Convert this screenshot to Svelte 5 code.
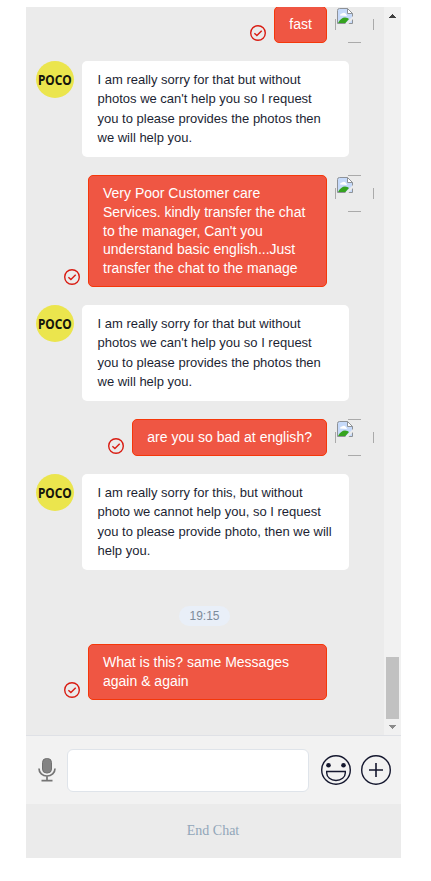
<script>
  const excuse = [
    'I am really sorry for that but without',
    "photos we can't help you so I request",
    'you to please provides the photos then',
    'we will help you.'
  ];

  const messages = [
    { from: 'user', lines: ['fast'], avatar: true },
    { from: 'agent', lines: excuse },
    {
      from: 'user',
      lines: [
        'Very Poor Customer care',
        'Services. kindly transfer the chat',
        "to the manager, Can't you",
        'understand basic english...Just',
        'transfer the chat to the manage'
      ],
      avatar: true,
      wide: true
    },
    { from: 'agent', lines: excuse },
    { from: 'user', lines: ['are you so bad at english?'], avatar: true },
    {
      from: 'agent',
      lines: [
        'I am really sorry for this, but without',
        'photo we cannot help you, so I request',
        'you to please provide photo, then we will',
        'help you.'
      ]
    },
    { from: 'time', text: '19:15' },
    { from: 'user', lines: ['What is this? same Messages', 'again & again'], avatar: false, wide: true }
  ];

  let draft = '';
</script>

<div class="chat">
  <div class="history">
    <div class="messages">
      {#each messages as message}
        {#if message.from === 'time'}
          <div class="time"><span>{message.text}</span></div>
        {:else if message.from === 'agent'}
          <div class="row agent">
            <div class="logo"><span>POCO</span></div>
            <div class="bubble">
              {#each message.lines as line}
                <div class="line">{line}</div>
              {/each}
            </div>
          </div>
        {:else}
          <div class="row user">
            <svg class="sent" viewBox="0 0 16 16">
              <circle cx="8" cy="8" r="7.3" />
              <path d="M4.4 8.2l2.5 2.4 4.8-4.9" />
            </svg>
            <div class="bubble" class:wide={message.wide}>
              {#each message.lines as line}
                <div class="line">{line}</div>
              {/each}
            </div>
            <div class="avatar" class:empty={!message.avatar}>
              {#if message.avatar}
                <svg class="broken" viewBox="0 0 16 16">
                  <path d="M.5 2.5Q.5 .5 2.5 .5H10.5L15.5 5.5V15.5H.5Z" fill="#c6dafa" />
                  <path d="M3 7.5a2 2 0 0 1 2-2 2.5 2.5 0 0 1 4 .5l1 2z" fill="#fff" />
                  <path d="M.5 2.5V15.5H15.5V5.5L10.5 .5H2.5Q.5 .5 .5 2.5z" fill="none" stroke="#8e9297" />
                  <path d="M10.5 .5V5.5H15.5z" fill="#fff" stroke="#8e9297" />
                  <path d="M1 15Q4 9.5 8 9.5q3 0 4 1.5L8.5 15z" fill="#35a31f" />
                  <path d="M16 8V11L11.5 16H8z" fill="#ebebeb" />
                </svg>
              {/if}
            </div>
          </div>
        {/if}
      {/each}
    </div>
    <div class="scrollbar">
      <svg class="arrow" viewBox="0 0 17 17"><path d="M5 11h7v-1h-1v-1h-1V8H9V7H8v1H7v1H6v1H5z" fill="#404040" /></svg>
      <div class="thumb"></div>
      <svg class="arrow down" viewBox="0 0 17 16"><path d="M5 6h7v1h-1v1h-1v1H9v1H8V9H7V8H6V7H5z" fill="#8b8b8b" /></svg>
    </div>
  </div>

  <div class="composer">
    <svg class="mic" viewBox="0 0 18 24">
      <rect x="4.5" y=".5" width="9" height="14.5" rx="4" fill="#848484" stroke="#707070" />
      <path d="M1 10.5C1 15 4.5 18 9 18s8-3 8-7.5M9 18v4.5M3.5 22.7h11" fill="none" stroke="#757575" stroke-width="1.7" />
    </svg>
    <input type="text" bind:value={draft} aria-label="Message" />
    <svg class="icon" viewBox="0 0 30 30">
      <circle cx="15" cy="15" r="14.3" />
      <circle class="eye" cx="7.5" cy="10.3" r="2.3" />
      <circle class="eye" cx="22.5" cy="10.3" r="2.3" />
      <path d="M5.7 16.5h18.6v1.5c0 4-4 7.5-9.3 7.5s-9.3-3.5-9.3-7.5z" />
    </svg>
    <svg class="icon" viewBox="0 0 30 30">
      <circle cx="15" cy="15" r="14.3" />
      <path class="plus" d="M8 15h14M15 8v14" />
    </svg>
  </div>

  <div class="end">End Chat</div>
</div>

<style>
  :global(body) {
    margin: 0;
    background: #fff;
  }

  .chat {
    width: 375px;
    height: 851px;
    margin: 7px 0 0 26px;
    display: flex;
    flex-direction: column;
    background: #ebebeb;
    font-family: 'Liberation Sans', Arial, sans-serif;
  }

  .history {
    height: 728px;
    display: flex;
    overflow: hidden;
  }

  .messages {
    flex: 1;
    display: flex;
    flex-direction: column;
    justify-content: flex-end;
    gap: 18px;
    padding: 0 10px 35.25px;
  }

  .row {
    display: flex;
    flex-shrink: 0;
    gap: 8px;
  }

  .bubble {
    box-sizing: border-box;
    border-radius: 5px;
  }

  .line {
    white-space: nowrap;
  }

  .agent .bubble {
    width: 267px;
    height: 96px;
    padding: 9px 15.5px;
    background: #fff;
    color: #1c1f33;
    font-size: 13px;
    line-height: 19.4px;
  }

  .logo {
    width: 38px;
    height: 37px;
    border-radius: 50%;
    background: #ebe54d;
    display: flex;
    align-items: center;
    justify-content: center;
  }

  .logo span {
    font: bold 14px/36px 'Noto Sans', sans-serif;
    color: #15150c;
    transform: scaleX(0.85);
  }

  .user {
    justify-content: flex-end;
  }

  .user .bubble {
    padding: 8px 14px 8.25px;
    border: 1px solid #f5370a;
    background: #ef5643;
    color: #fff;
    font-size: 14px;
    line-height: 18.75px;
    letter-spacing: 0.02px;
  }

  .user .bubble.wide {
    width: 239px;
    letter-spacing: 0;
  }

  .sent {
    width: 16px;
    height: 16px;
    align-self: flex-end;
    margin-bottom: 2px;
    fill: none;
    stroke: #d91c12;
    stroke-width: 1.4;
  }

  .avatar {
    box-sizing: border-box;
    width: 39px;
    height: 37px;
    padding: 2px;
    /* only the middle of each side of the image frame stays visible */
    background:
      linear-gradient(#aaa, #aaa) 13px 0 / 13px 1px no-repeat,
      linear-gradient(#aaa, #aaa) 13px 100% / 13px 1px no-repeat,
      linear-gradient(#aaa, #aaa) 0 13px / 1px 11px no-repeat,
      linear-gradient(#aaa, #aaa) 100% 13px / 1px 11px no-repeat;
  }

  .avatar.empty {
    background: none;
  }

  .broken {
    display: block;
    width: 16px;
    height: 16px;
  }

  .time {
    display: flex;
    flex-shrink: 0;
    justify-content: center;
    margin-top: 18px;
    padding-right: 1px;
  }

  .time span {
    width: 51px;
    height: 20px;
    border-radius: 10px;
    background: #e9eff8;
    color: #7d8b9b;
    font-size: 12px;
    line-height: 20px;
    text-align: center;
  }

  .scrollbar {
    width: 17px;
    display: flex;
    flex-direction: column;
    align-items: center;
    background: #f1f1f1;
  }

  .arrow {
    width: 17px;
    height: 17px;
  }

  .arrow.down {
    height: 16px;
  }

  .thumb {
    width: 13px;
    height: 62px;
    margin-top: auto;
    background: #c1c1c1;
  }

  .composer {
    box-sizing: border-box;
    height: 69px;
    display: flex;
    align-items: center;
    padding: 0 10px 0 12px;
    border-top: 1px solid #dfe1e6;
    background: #f2f2f2;
  }

  .mic {
    width: 18px;
    height: 24px;
  }

  input {
    box-sizing: border-box;
    width: 242px;
    height: 43px;
    margin: 0 12px 0 11px;
    padding: 0 10px;
    border: 1px solid #dfe4ea;
    border-radius: 6px;
    outline: none;
    background: #fff;
    font: inherit;
  }

  .icon {
    width: 30px;
    height: 30px;
    fill: none;
    stroke: #14172e;
    stroke-width: 1.4;
  }

  .icon + .icon {
    margin-left: 10px;
  }

  .eye {
    fill: #14172e;
    stroke: none;
  }

  .plus {
    stroke-width: 1.6;
  }

  .end {
    height: 54px;
    padding-right: 1px;
    color: #91a6b9;
    font: 14px/54px 'Liberation Serif', serif;
    text-align: center;
  }
</style>
